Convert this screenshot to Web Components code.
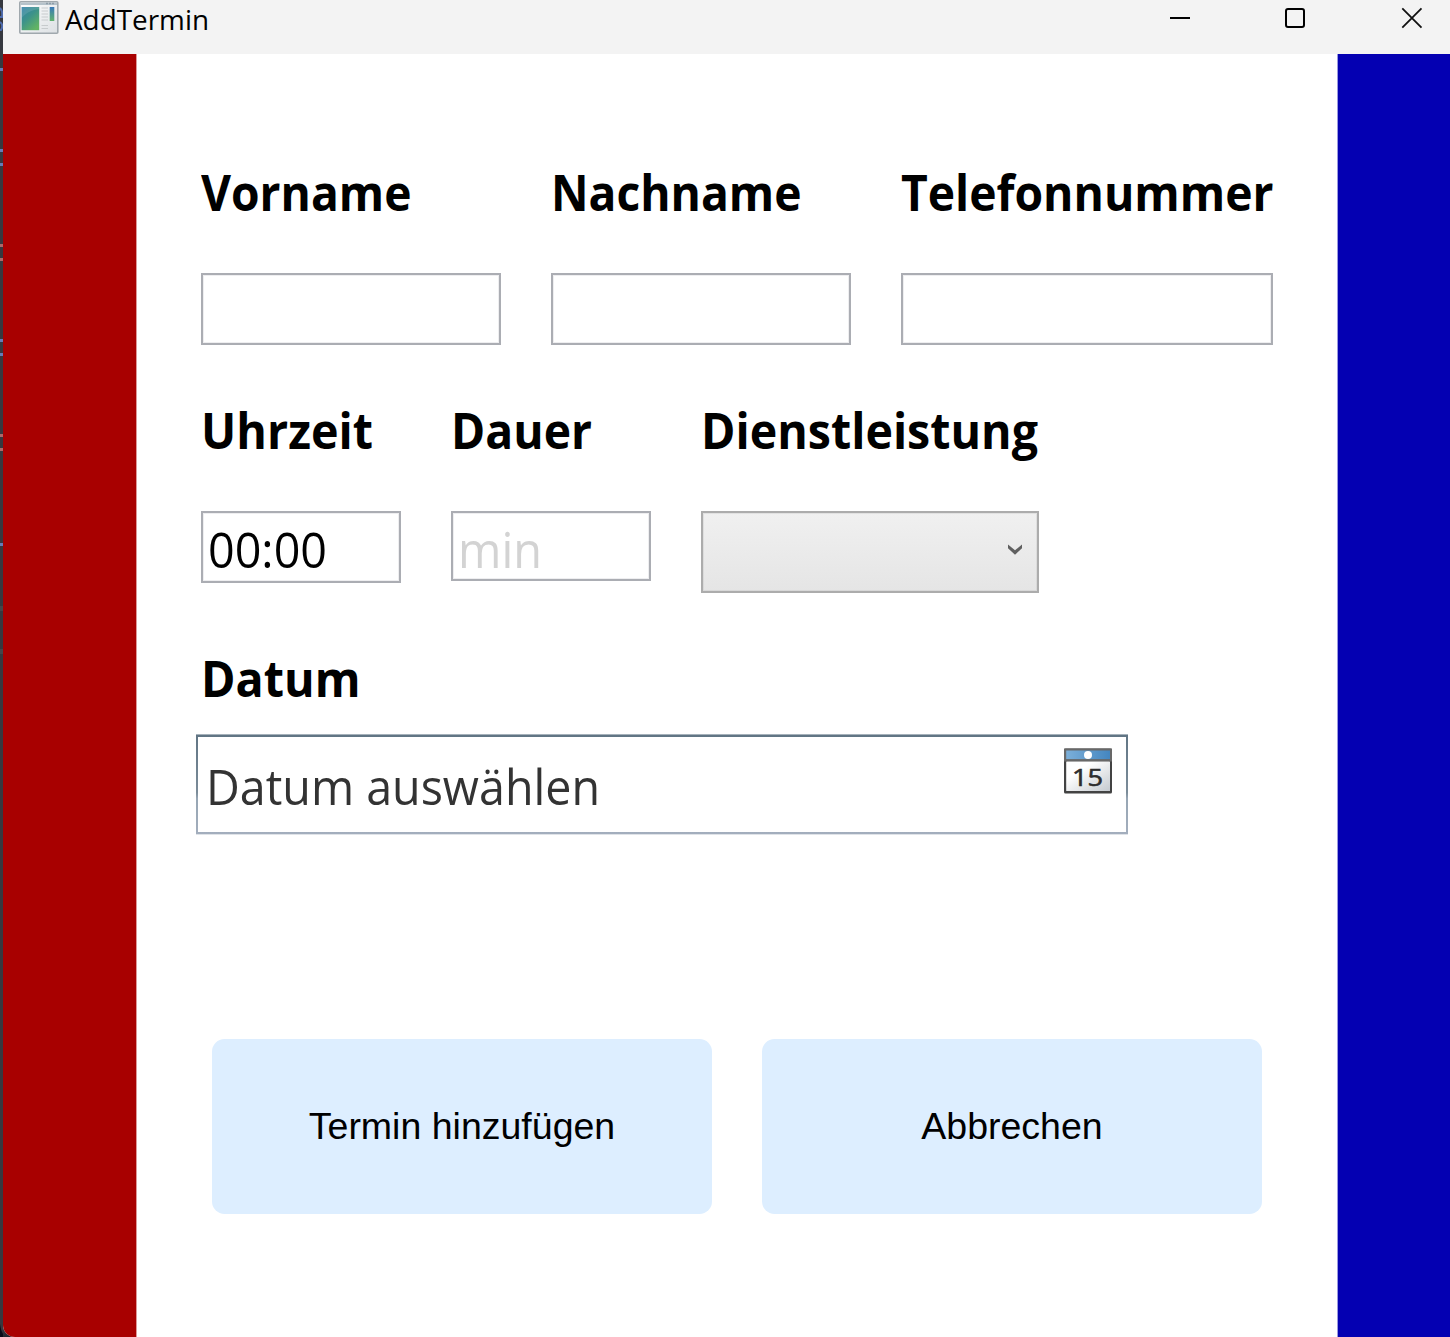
<!DOCTYPE html>
<html lang="de">
<head>
<meta charset="utf-8">
<title>AddTermin</title>
<style>
html, body { margin: 0; height: 100%; overflow: hidden; background: #36383f; }
body { font-family: "Open Sans", "Noto Sans", sans-serif; color: #000; }
</style>
</head>
<body>
<app-desktop>
  <app-window caption="AddTermin">
    <form-row style="gap:50px">
      <form-field label="Vorname" label-width="210.5" style="width:300px"><text-box></text-box></form-field>
      <form-field label="Nachname" label-width="250.5" style="width:300px"><text-box></text-box></form-field>
      <form-field label="Telefonnummer" label-width="372.5" style="width:372px"><text-box></text-box></form-field>
    </form-row>
    <form-row style="gap:50px">
      <form-field label="Uhrzeit" label-width="172" style="width:200px"><text-box><fit-text width="119">00:00</fit-text></text-box></form-field>
      <form-field label="Dauer" label-width="141" style="width:200px"><text-box style="height:70px;--ink:#d3d3d3"><fit-text width="84">min</fit-text></text-box></form-field>
      <form-field label="Dienstleistung" label-width="337" style="width:338px"><combo-box></combo-box></form-field>
    </form-row>
    <form-row>
      <form-field label="Datum" label-width="159.5" style="--field-gap:23px"><date-picker><fit-text width="394">Datum auswählen</fit-text></date-picker></form-field>
    </form-row>
    <push-button slot="actions">Termin hinzufügen</push-button>
    <push-button slot="actions">Abbrechen</push-button>
  </app-window>
</app-desktop>
<script>
const define = (name, html, init) => customElements.define(name, class extends HTMLElement {
  constructor() {
    super();
    this.attachShadow({ mode: 'open' }).innerHTML = html;
  }
  connectedCallback() { if (init) init(this, this.shadowRoot); }
});

define('form-row', `<style>:host { display: flex; align-items: flex-start; }</style><slot></slot>`);

define('form-field', `
<style>
:host { display: flex; flex-direction: column; gap: var(--field-gap, 48px); }
.label { height: 66px; font-size: 49.3px; line-height: 65.5px; font-weight: 700; }
</style><div class="label"></div><slot></slot>`, (host, root) => {
  const label = document.createElement('fit-text');
  label.setAttribute('width', host.getAttribute('label-width'));
  label.textContent = host.getAttribute('label');
  root.querySelector('.label').append(label);
});

define('text-box', `
<style>
:host { display: block; box-sizing: border-box; height: 72px; border: 2px solid #abadb3; background: #fff;
  box-shadow: inset 0 0 0 1px #eeeef0; padding: 3px 5px; font-size: 50px; line-height: 66px; color: var(--ink, #000); }
</style><slot></slot>`);

define('combo-box', `
<style>
:host { display: flex; box-sizing: border-box; height: 82px; border: 2px solid #acacac; justify-content: flex-end;
  align-items: flex-start; padding: 31px 14px 0 0; background: linear-gradient(#f0f0f0, #e5e5e5); box-shadow: inset 0 0 0 1px rgba(172,172,172,.22); }
</style>
<svg width="16" height="12" viewBox="0 0 16 12"><path d="M1 .4 8 6.3 15 .4V4.2L8 10.8 1 4.2Z" fill="#606060"/></svg>`);

define('date-picker', `
<style>
:host { display: flex; box-sizing: border-box; justify-content: space-between; width: 932px; height: 101px; margin: 0 0 0 -5px;
  padding: 3px 2px; background: linear-gradient(#a5b1ba 0 1px, #617584 1px, #7b8c99 58%, #97a6b4 64%, #a3aebd 100px, #dfe3e8 100px); }
.inner { flex: 1; display: flex; justify-content: space-between; background: #fff;
  padding: 16px 13px 0 8px; font-size: 50px; line-height: 66px; color: #333; }
svg { display: block; margin-top: -5px; }
</style>
<div class="inner"><slot></slot>
<svg width="50" height="48" viewBox="0 0 50 48">
  <defs>
    <linearGradient id="page" x1="0" y1="0" x2="1" y2="1"><stop offset=".3" stop-color="#fff"/><stop offset="1" stop-color="#c5cacf"/></linearGradient>
    <linearGradient id="head" x1="0" y1="0" x2="1" y2="0"><stop stop-color="#7bafd9"/><stop offset="1" stop-color="#4486c0"/></linearGradient>
  </defs>
  <rect x="1" y=".5" width="48" height="45" rx="1.5" fill="#434343"/>
  <rect x="1" y=".5" width="48" height="13" fill="#686868"/>
  <rect x="3.2" y="2.5" width="43.8" height="8.6" fill="url(#head)"/>
  <rect x="3.2" y="13.5" width="43.8" height="29.5" rx=".6" fill="url(#page)"/>
  <circle cx="25" cy="7" r="4" fill="#fff"/>
  <text x="9" y="37.5" font-family="Open Sans" font-weight="500" font-size="23" textLength="31" lengthAdjust="spacingAndGlyphs" fill="#2d2d2d" stroke="#2d2d2d" stroke-width=".6">15</text>
</svg></div>`);

define('push-button', `
<style>
:host { display: flex; align-items: center; justify-content: center; width: 500px; height: 175px; border-radius: 12.5px;
  background: #ddeeff; font: 37.5px "Liberation Sans", Arial, sans-serif; }
</style><slot></slot>`);

define('title-bar', `
<style>
:host { display: flex; height: 54px; background: #f3f3f3; }
svg { display: block; flex: none; }
.caption { margin-left: 6px; font-size: 28px; line-height: 39px; flex: 1; }
</style>
<svg width="40" height="36" viewBox="0 0 40 36" style="margin-left:16px">
  <defs>
    <linearGradient id="pane" x1="0" y1="0" x2=".7" y2="1"><stop stop-color="#2f7fa8"/><stop offset=".5" stop-color="#3d9389"/><stop offset="1" stop-color="#62b463"/></linearGradient>
    <linearGradient id="side" x1="0" y1="0" x2="0" y2="1"><stop stop-color="#3878b8"/><stop offset="1" stop-color="#60b36d"/></linearGradient>
    <linearGradient id="face" x1="0" y1="0" x2="1" y2="1"><stop stop-color="#fff"/><stop offset="1" stop-color="#dce0e3"/></linearGradient>
  </defs>
  <rect x=".8" y="1.8" width="38" height="31.5" rx="1" fill="url(#face)" stroke="#a0a8ad" stroke-width="1.6"/>
  <path d="M1.5 3.8H38" stroke="#b5c2ca" stroke-width="2.4"/>
  <path d="M27 3.5h9" stroke="#8d9ca8" stroke-width="1.4" stroke-dasharray="2 1"/>
  <rect x="2.6" y="7" width="17.6" height="23.2" fill="url(#pane)"/>
  <path d="M2.6 18C8 12 13 10 20.2 9V7H2.6Z" fill="#fff" opacity=".12"/>
  <path d="M22.5 8h6.5M22.5 11h6.5M22.5 14h6.5M22.5 17h6.5M22.5 20h6.5M22.5 25.5h6.5M22.5 28.5h6.5" stroke="#c7cbcd" stroke-width="1.1"/>
  <rect x="30.7" y="7" width="4.6" height="14" fill="url(#side)"/>
  <path d="M31 25.5h5M31 28.5h5" stroke="#e2e5e7" stroke-width="1"/>
</svg>
<div class="caption"><fit-text width="144">AddTermin</fit-text></div>
<svg width="280" height="54" viewBox="1170 0 280 54" fill="none" stroke="#000" stroke-width="2">
  <path d="M1170 18h20"/>
  <rect x="1286" y="9" width="18" height="18" rx="2"/>
  <path d="M1402.3 8.3l19.2 19.4M1421.5 8.3l-19.2 19.4" stroke-width="1.8" stroke="#111"/>
</svg>`);

define('app-window', `
<style>
:host { display: flex; flex-direction: column; flex: 1; height: 1337px; overflow: hidden; border-bottom-left-radius: 12px; background: #fff; }
.body { display: flex; flex: 1; }
.left { width: 133px; background: #a80000; border-right: 1px solid #dc9999; }
.right { width: 112px; background: #0400b2; border-left: 1px solid #9b99e0; }
main { flex: 1; display: flex; flex-direction: column; padding: 105px 0 0 64px; gap: 52px; }
.actions { display: flex; gap: 50px; padding: 152px 0 0 11px; }
</style>
<title-bar></title-bar>
<div class="body">
  <div class="left"></div>
  <main><slot></slot><div class="actions"><slot name="actions"></slot></div></main>
  <div class="right"></div>
</div>`);

// The strip of the code editor that shows behind the window's left edge.
define('app-desktop', `
<style>
:host { display: flex; height: 1337px; background: linear-gradient(#36383f 0 1330px, #20222c 1337px); }
svg { display: block; flex: none; }
</style>
<svg width="3" height="1337" viewBox="0 0 3 1337">
  <path d="M0 8Q3 11 2 17H0M0 22Q4 25 1 30H0" fill="none" stroke="#4f6caf" stroke-width="2"/>
  <path d="M0 69.5h3M0 150.5h3M0 164.5h3M0 340.5h3M0 354.5h3M0 544.5h3" stroke="#667bb8" stroke-width="3"/>
  <path d="M0 245.5h3M0 259.5h3M0 435.5h3M0 449.5h3" stroke="#ad686a" stroke-width="3"/>
  <path d="M0 608.5h3M0 651.5h3" stroke="#45464a" stroke-width="5"/>
  <path d="M0 1324Q1 1331 3 1334V1337H0Z" fill="#090b18"/>
</svg>
<slot></slot>`);

// Text stretched horizontally to the advance width given in pixels. It measures
// itself with its inherited font, so it is defined after the elements that hold it.
define('fit-text', `
<style>
:host { display: block; white-space: nowrap; }
span { display: inline-block; transform-origin: 0 50%; }
</style><span><slot></slot></span>`, (host, root) => {
  const span = root.querySelector('span');
  const width = host.getAttribute('width');
  const natural = span.getBoundingClientRect().width;
  host.style.width = width + 'px';
  span.style.transform = `scaleX(${width / natural})`;
});
</script>
</body>
</html>
